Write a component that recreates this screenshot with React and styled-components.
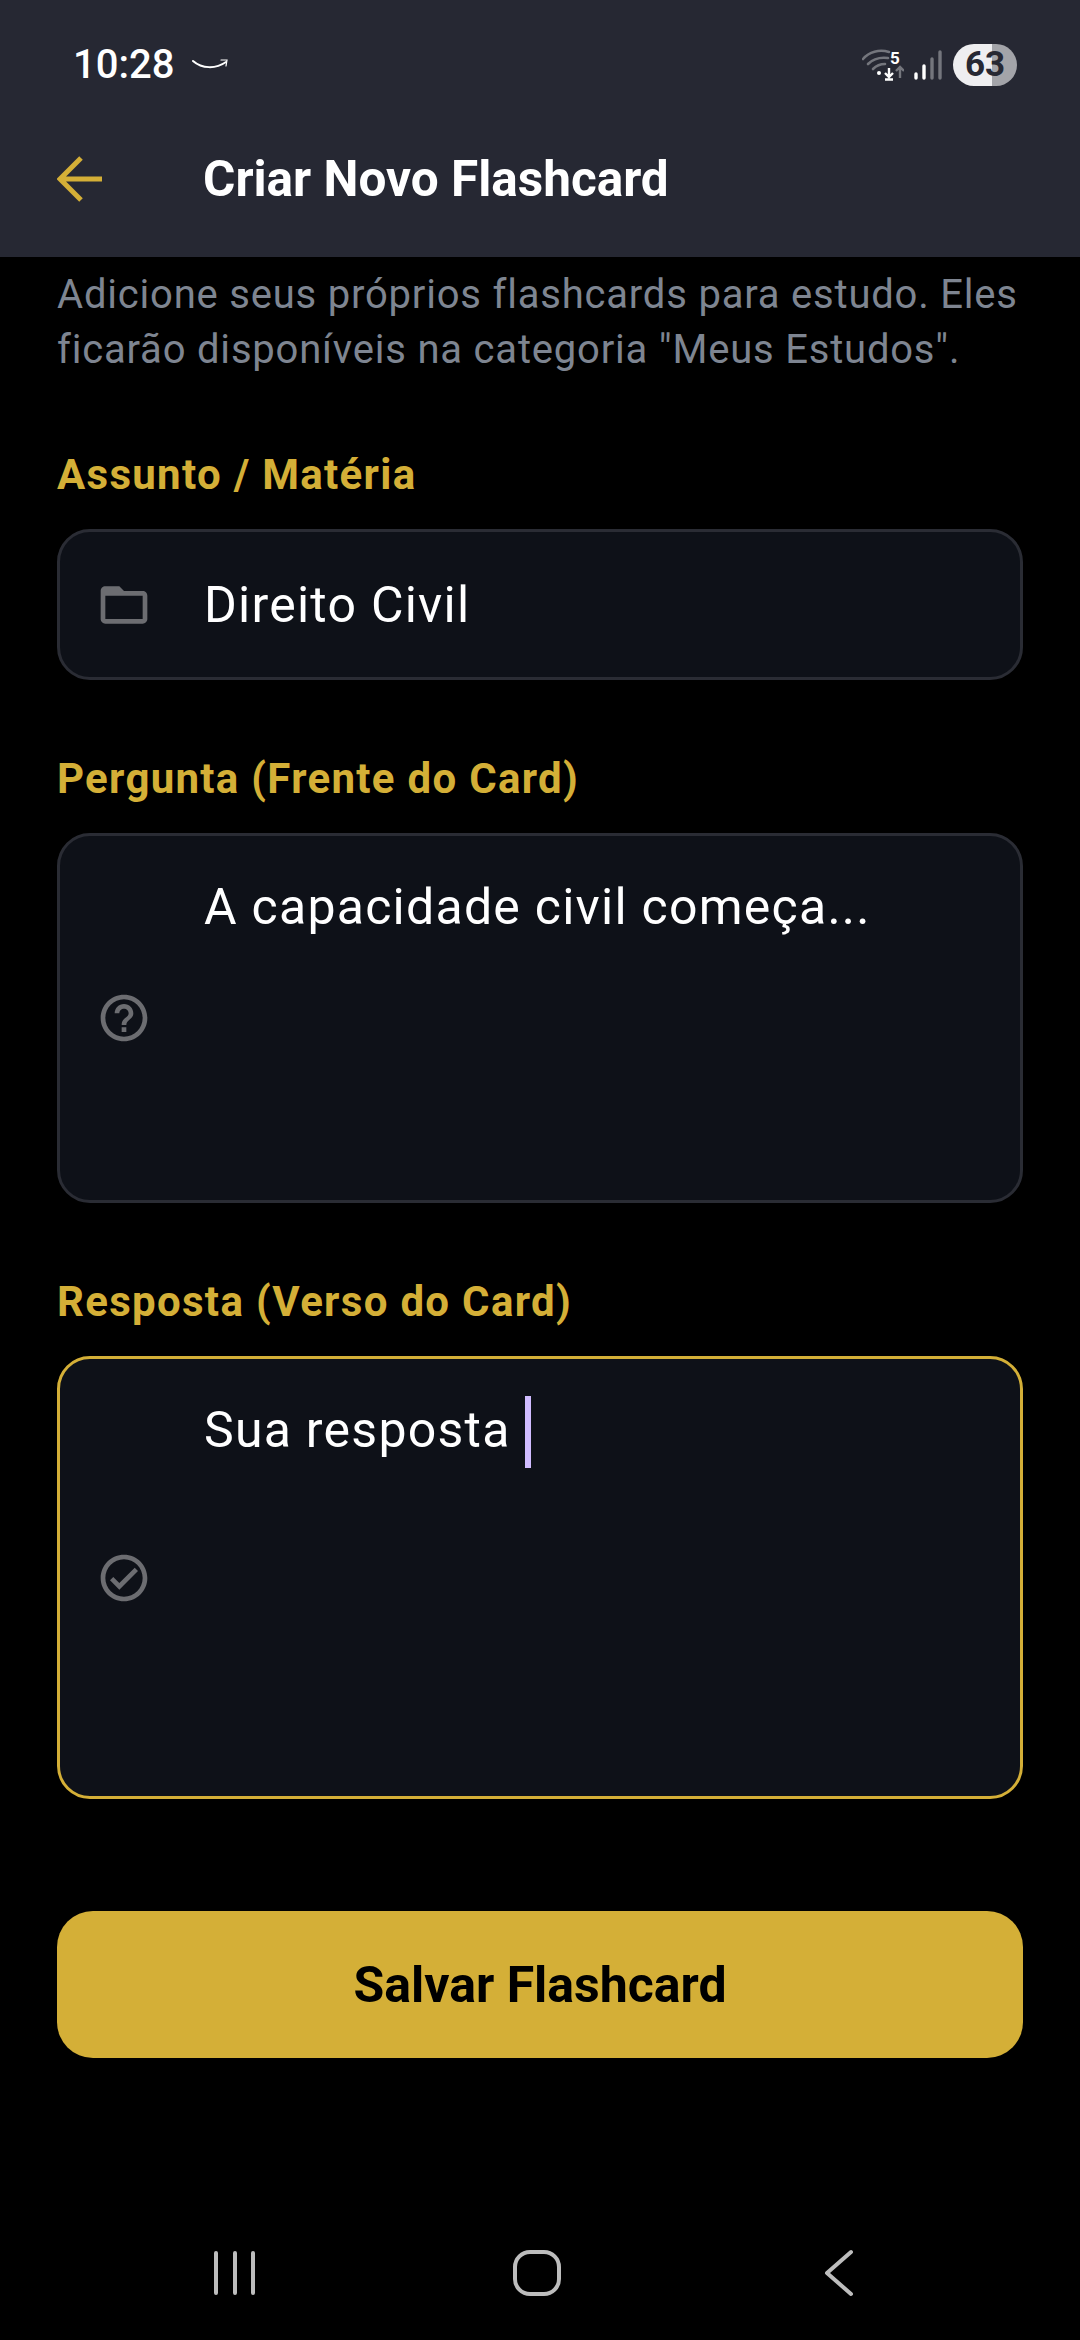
import React from 'react';
import styled, { createGlobalStyle } from 'styled-components';

const GlobalStyle = createGlobalStyle`
  html, body {
    margin: 0;
    padding: 0;
    background: #000;
  }
  * {
    box-sizing: border-box;
  }
`;

const Screen = styled.div`
  width: 1080px;
  height: 2340px;
  display: flex;
  flex-direction: column;
  background: #000;
  font-family: Roboto, "Liberation Sans", sans-serif;
  overflow: hidden;
`;

const Header = styled.header`
  height: 257px;
  flex-shrink: 0;
  background: #262833;
  display: flex;
  flex-direction: column;
`;

const StatusBar = styled.div`
  height: 126px;
  padding: 3px 63px 0 73px;
  display: flex;
  align-items: center;
  justify-content: space-between;
`;

const StatusLeft = styled.div`
  display: flex;
  align-items: center;
  gap: 18px;
`;

const Clock = styled.span`
  color: #fff;
  font-size: 40px;
  font-weight: 500;
`;

const StatusRight = styled.div`
  display: flex;
  align-items: center;
  gap: 10px;
`;

const Battery = styled.div`
  width: 64px;
  height: 42px;
  margin-left: 1px;
  border-radius: 21px;
  background: linear-gradient(90deg, #eeeef0 0 61%, #a3a4a9 61% 100%);
  color: #262833;
  font-size: 35px;
  font-weight: 700;
  display: flex;
  align-items: center;
  justify-content: center;
`;

const TopBar = styled.div`
  height: 106px;
  padding: 0 0 0 57px;
  display: flex;
  align-items: center;
  gap: 100px;
`;

const Title = styled.h1`
  margin: 0;
  color: #fff;
  font-size: 49.5px;
  font-weight: 700;
`;

const Content = styled.main`
  flex: 1;
  padding: 10px 57px 0;
  display: flex;
  flex-direction: column;
`;

const Intro = styled.p`
  margin: 0 0 74px;
  color: #7e8591;
  font-size: 40px;
  line-height: 55px;
  letter-spacing: 0.8px;
`;

const Label = styled.label`
  display: block;
  color: #d4af37;
  font-size: 42px;
  font-weight: 700;
  letter-spacing: 1.3px;
  line-height: 47px;
  margin-bottom: 31px;
`;

const Field = styled.div`
  height: ${(p) => p.$height}px;
  margin-bottom: 75px;
  padding: 0 36px;
  display: flex;
  align-items: center;
  gap: 52px;
  background: #0e1118;
  border: 3px solid ${(p) => (p.$active ? '#d4af37' : '#2a2c34')};
  border-radius: 33px;
`;

const FieldIcon = styled.svg`
  width: 56px;
  height: 56px;
  flex-shrink: 0;
  fill: #6c6d71;
`;

const FieldText = styled.div`
  align-self: ${(p) => (p.$multi ? 'flex-start' : 'center')};
  padding-top: ${(p) => (p.$multi ? '43px' : '0')};
  color: #fff;
  font-size: 50px;
  line-height: 56px;
  letter-spacing: 1.25px;
  display: flex;
  align-items: center;
`;

const Caret = styled.span`
  width: 6px;
  height: 72px;
  margin: -6px 0 -10px 14px;
  background: #d0bcff;
`;

const SaveButton = styled.button`
  height: 147px;
  margin-top: 37px;
  border: none;
  border-radius: 36px;
  background: #d4af37;
  color: #000;
  font-family: inherit;
  font-size: 50px;
  font-weight: 700;
`;

const NavBar = styled.nav`
  height: 134px;
  flex-shrink: 0;
  padding-right: 6px;
  display: flex;
  align-items: center;
  justify-content: center;
`;

const NavSlot = styled.div`
  width: 302px;
  display: flex;
  justify-content: center;
`;

const NavIcon = styled.svg`
  stroke: #bdbdbd;
  stroke-width: 4;
  stroke-linecap: round;
  stroke-linejoin: round;
  fill: none;
`;

const folderPath = 'M20 6h-8l-2-2H4c-1.1 0-1.99.9-1.99 2L2 18c0 1.1.9 2 2 2h16c1.1 0 2-.9 2-2V8c0-1.1-.9-2-2-2zm0 12H4V8h16v10z';
const helpPath = 'M11 18h2v-2h-2v2zm1-16C6.48 2 2 6.48 2 12s4.48 10 10 10 10-4.48 10-10S17.52 2 12 2zm0 18c-4.41 0-8-3.59-8-8s3.59-8 8-8 8 3.59 8 8-3.59 8-8 8zm0-14c-2.21 0-4 1.79-4 4h2c0-1.1.9-2 2-2s2 .9 2 2c0 2-3 1.75-3 5h2c0-2.25 3-2.5 3-5 0-2.21-1.79-4-4-4z';
const checkPath = 'M12 2C6.48 2 2 6.48 2 12s4.48 10 10 10 10-4.48 10-10S17.52 2 12 2zm0 18c-4.41 0-8-3.59-8-8s3.59-8 8-8 8 3.59 8 8-3.59 8-8 8zm4.59-12.42L10 14.17l-2.59-2.58L6 13l4 4 8-8z';

const SmileIcon = () => (
  <svg width="36" height="14" viewBox="0 0 36 14" fill="none">
    <path d="M1 3 C10 11 24 11 34 4" stroke="#fff" strokeWidth="2" strokeLinecap="round" />
    <path d="M29 2 L35 2 L34 8" stroke="#fff" strokeWidth="1.2" strokeLinecap="round" />
  </svg>
);

const WifiIcon = () => (
  <svg width="42" height="32" viewBox="0 0 42 32" fill="none">
    <path d="M1 10 C7 3 17 0 27 3" stroke="#74767d" strokeWidth="2.6" strokeLinecap="round" />
    <path d="M6 15 C11 10 18 8 26 9" stroke="#74767d" strokeWidth="2.6" strokeLinecap="round" />
    <path d="M11 20 C14 17 18 15 23 15" stroke="#74767d" strokeWidth="2.6" strokeLinecap="round" />
    <circle cx="17" cy="24" r="2" fill="#fff" />
    <path d="M27 19 V27 M23 24 L27 28 L31 24 M23 30.5 H31" stroke="#fff" strokeWidth="2.4" />
    <path d="M38 29 V18 M34 22 L38 18 L42 22" stroke="#74767d" strokeWidth="2.4" />
    <text x="28" y="15" fontFamily="Roboto" fontSize="17" fontWeight="700" fill="#fff">5</text>
  </svg>
);

const SignalIcon = () => (
  <svg width="28" height="30" viewBox="0 0 28 30" fill="none" strokeWidth="3.4" strokeLinecap="round">
    <path d="M2 28 V24" stroke="#fff" />
    <path d="M10 28 V16" stroke="#fff" />
    <path d="M18 28 V9" stroke="#74767d" />
    <path d="M26 28 V2" stroke="#74767d" />
  </svg>
);

const BackArrow = () => (
  <svg width="46" height="46" viewBox="0 0 46 46" fill="none" stroke="#d4af37" strokeWidth="5">
    <path d="M45 23 H3 M24 2 L3 23 L24 44" />
  </svg>
);

export default function App() {
  return (
    <Screen>
      <GlobalStyle />
      <Header>
        <StatusBar>
          <StatusLeft>
            <Clock>10:28</Clock>
            <SmileIcon />
          </StatusLeft>
          <StatusRight>
            <WifiIcon />
            <SignalIcon />
            <Battery>63</Battery>
          </StatusRight>
        </StatusBar>
        <TopBar>
          <BackArrow />
          <Title>Criar Novo Flashcard</Title>
        </TopBar>
      </Header>
      <Content>
        <Intro>
          Adicione seus próprios flashcards para estudo. Eles ficarão disponíveis na categoria "Meus Estudos".
        </Intro>

        <Label>Assunto / Matéria</Label>
        <Field $height={151}>
          <FieldIcon viewBox="0 0 24 24"><path d={folderPath} /></FieldIcon>
          <FieldText>Direito Civil</FieldText>
        </Field>

        <Label>Pergunta (Frente do Card)</Label>
        <Field $height={370} $multi>
          <FieldIcon viewBox="0 0 24 24"><path d={helpPath} /></FieldIcon>
          <FieldText $multi>A capacidade civil começa...</FieldText>
        </Field>

        <Label>Resposta (Verso do Card)</Label>
        <Field $height={443} $multi $active>
          <FieldIcon viewBox="0 0 24 24"><path d={checkPath} /></FieldIcon>
          <FieldText $multi>Sua resposta<Caret /></FieldText>
        </Field>

        <SaveButton>Salvar Flashcard</SaveButton>
      </Content>
      <NavBar>
        <NavSlot>
          <NavIcon width="46" height="46" viewBox="0 0 46 46">
            <path d="M4 3 V43 M23 3 V43 M41 3 V43" />
          </NavIcon>
        </NavSlot>
        <NavSlot>
          <NavIcon width="50" height="48" viewBox="0 0 50 48">
            <rect x="3" y="3" width="44" height="42" rx="15" />
          </NavIcon>
        </NavSlot>
        <NavSlot>
          <NavIcon width="30" height="48" viewBox="0 0 30 48">
            <path d="M27 3 L3 24 L27 45" />
          </NavIcon>
        </NavSlot>
      </NavBar>
    </Screen>
  );
}
